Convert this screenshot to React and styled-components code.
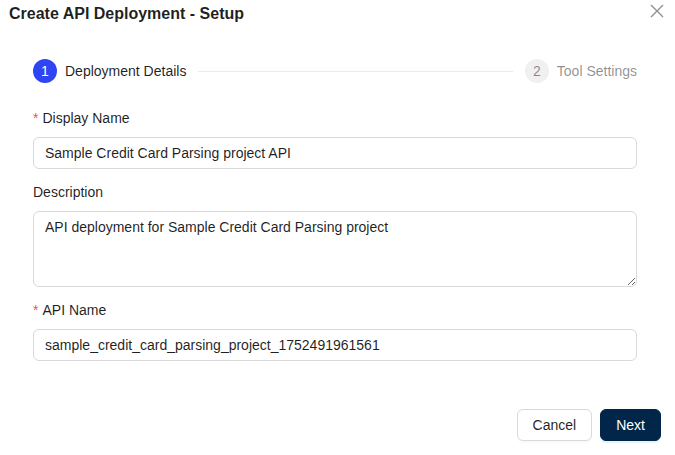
import React from "react";
import styled, { createGlobalStyle } from "styled-components";

const Global = createGlobalStyle`
  html, body { margin: 0; padding: 0; background: #fff; }
  body { font-family: "Liberation Sans", Arial, sans-serif; color: rgba(0,0,0,0.88); }
  * { box-sizing: border-box; }
`;

const Modal = styled.div`
  position: relative;
  width: 675px;
  height: 455px;
  background: #fff;
  display: flex;
  flex-direction: column;
  overflow: hidden;
`;

const Header = styled.div`
  padding: 2px 9px 0;
`;

const Title = styled.h1`
  margin: 0;
  font-size: 16px;
  font-weight: 700;
  line-height: 24px;
  color: rgba(0,0,0,0.88);
`;

const Close = styled.button`
  position: absolute;
  top: 3px;
  right: 10px;
  width: 16px;
  height: 16px;
  padding: 0;
  border: 0;
  background: transparent;
  display: flex;
  align-items: center;
  justify-content: center;
  cursor: pointer;
`;

const Body = styled.div`
  padding: 33px 38px 0 33px;
  display: flex;
  flex-direction: column;
`;

const Steps = styled.div`
  display: flex;
  align-items: center;
  height: 24px;
  margin-bottom: 24px;
`;

const Step = styled.div`
  display: flex;
  align-items: center;
  gap: 8px;
  flex: none;
`;

const StepIcon = styled.span`
  width: 24px;
  height: 24px;
  border-radius: 50%;
  display: flex;
  align-items: center;
  justify-content: center;
  font-size: 14px;
  background: ${p => (p.$active ? "#2f45f4" : "#f0f0f0")};
  color: ${p => (p.$active ? "#fff" : "rgba(0,0,0,0.45)")};
`;

const StepTitle = styled.span`
  font-size: 14px;
  line-height: 22px;
  color: ${p => (p.$active ? "rgba(0,0,0,0.88)" : "rgba(0,0,0,0.45)")};
`;

const Connector = styled.div`
  flex: 1;
  height: 1px;
  background: #ebebeb;
  margin: 0 12px;
`;

const Field = styled.div`
  display: flex;
  flex-direction: column;
  margin-bottom: ${p => p.$last ? "0" : "12px"};
`;

const Label = styled.label`
  font-size: 14px;
  line-height: 22px;
  padding-bottom: 8px;
  display: flex;
  align-items: center;
  color: rgba(0,0,0,0.88);
`;

const Req = styled.span`
  color: #ff4d4f;
  margin-right: 4px;
  font-size: 14px;
  font-family: SimSun, sans-serif;
  line-height: 1;
`;

const Input = styled.input`
  height: 32px;
  border: 1px solid #d9d9d9;
  border-radius: 6px;
  padding: 4px 11px;
  font: inherit;
  font-size: 14px;
  line-height: 22px;
  color: rgba(0,0,0,0.88);
  outline: none;
  width: 100%;
`;

const TextArea = styled.textarea`
  height: 76px;
  border: 1px solid #d9d9d9;
  border-radius: 6px;
  padding: 4px 11px;
  font: inherit;
  font-size: 14px;
  line-height: 22px;
  color: rgba(0,0,0,0.88);
  outline: none;
  resize: vertical;
  width: 100%;
  display: block;
`;

const Footer = styled.div`
  margin-top: auto;
  padding: 0 14px 14px;
  display: flex;
  justify-content: flex-end;
  gap: 8px;
`;

const Button = styled.button`
  height: 32px;
  padding: 4px 15px;
  border-radius: 6px;
  font: inherit;
  font-size: 14px;
  line-height: 22px;
  cursor: pointer;
  border: 1px solid ${p => (p.$primary ? "#022649" : "#d9d9d9")};
  background: ${p => (p.$primary ? "#022649" : "#fff")};
  color: ${p => (p.$primary ? "#fff" : "rgba(0,0,0,0.88)")};
  box-shadow: ${p => (p.$primary ? "0 2px 0 rgba(5,145,255,0.1)" : "0 2px 0 rgba(0,0,0,0.02)")};
`;

export default function App() {
  return (
    <>
      <Global />
      <Modal>
        <Header>
          <Title>Create API Deployment - Setup</Title>
        </Header>
        <Close aria-label="Close">
          <svg width="14" height="14" viewBox="0 0 14 14">
            <path d="M1 1L13 13M13 1L1 13" stroke="#8c8c8c" strokeWidth="1.3" fill="none" />
          </svg>
        </Close>
        <Body>
          <Steps>
            <Step>
              <StepIcon $active>1</StepIcon>
              <StepTitle $active>Deployment Details</StepTitle>
            </Step>
            <Connector />
            <Step>
              <StepIcon>2</StepIcon>
              <StepTitle>Tool Settings</StepTitle>
            </Step>
          </Steps>
          <Field>
            <Label><Req>*</Req>Display Name</Label>
            <Input defaultValue="Sample Credit Card Parsing project API" />
          </Field>
          <Field>
            <Label>Description</Label>
            <TextArea defaultValue="API deployment for Sample Credit Card Parsing project" />
          </Field>
          <Field $last>
            <Label><Req>*</Req>API Name</Label>
            <Input defaultValue="sample_credit_card_parsing_project_1752491961561" />
          </Field>
        </Body>
        <Footer>
          <Button>Cancel</Button>
          <Button $primary>Next</Button>
        </Footer>
      </Modal>
    </>
  );
}
